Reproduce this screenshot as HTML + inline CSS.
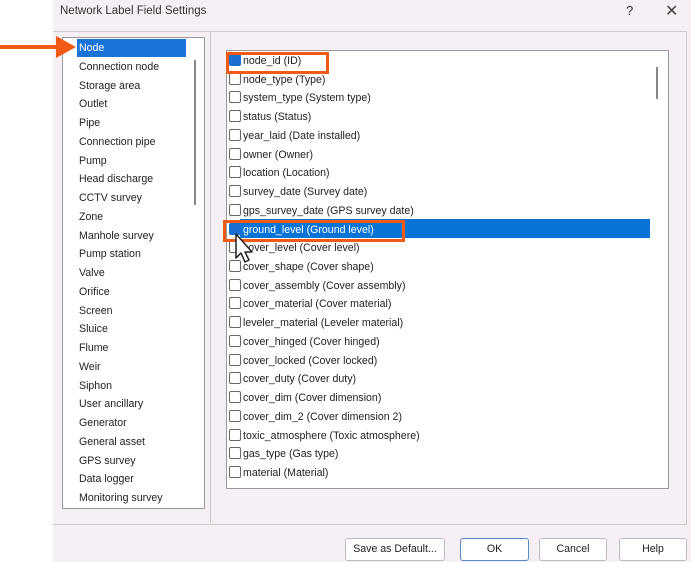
<!DOCTYPE html>
<html><head><style>
body{margin:0;width:691px;height:562px;position:relative;background:#fff;font-family:"Liberation Sans",sans-serif;font-size:10.6px;color:#222;overflow:hidden}
.dlg{position:absolute;left:53px;top:0;width:638px;height:562px;background:#f6eff6}
.abs{position:absolute}
.row{position:absolute;left:0;height:18px;line-height:18px;white-space:nowrap}
.cb{display:inline-block;width:10px;height:10px;border:1px solid #666;border-radius:2px;background:#fff;vertical-align:-2px;margin-right:2px}
.btn{position:absolute;top:538px;height:21px;border:1px solid #bbb;background:#fff;border-radius:3px;text-align:center;line-height:21px;font-size:10.6px}
</style></head><body>
<div class="dlg"></div>
<div class="abs" style="left:60px;top:5px;font-size:11.5px;color:#333">Network Label Field Settings</div>
<div class="abs" style="left:626px;top:3px;font-size:13px;color:#333">?</div>
<div class="abs" style="left:665px;top:1px;font-size:16px;color:#444">✕</div>
<div class="abs" style="left:53px;top:31px;width:633px;height:492px;border-top:1px solid #ccc;border-right:1px solid #ccc;border-bottom:1px solid #ccc"></div>
<div class="abs" style="left:210px;top:31px;width:1px;height:492px;background:#ccc"></div>
<div class="abs" style="left:62px;top:37px;width:141px;height:470px;border:1px solid #999;background:#fff"></div>
<div class="abs" style="left:77px;top:39px;width:109px;height:18px;background:#1a73d9"></div>
<div class="abs" style="left:194px;top:60px;width:2px;height:145px;background:#888"></div>
<div class="abs" style="left:79px;top:39px" id="l"></div>
<div class="abs" style="left:226px;top:50px;width:441px;height:437px;border:1px solid #999;background:#fff"></div>
<div class="abs" style="left:240px;top:219px;width:410px;height:19px;background:#0a74d6"></div>
<div class="abs" style="left:656px;top:67px;width:2px;height:32px;background:#888"></div>
<div class="abs" style="left:229px;top:52px" id="r"></div>
<div class="abs" style="left:226px;top:52px;width:97px;height:16px;border:3px solid #f05a14"></div>
<div class="abs" style="left:223px;top:220px;width:176px;height:16px;border:3px solid #f05a14"></div>
<div class="abs" style="left:0;top:45px;width:60px;height:4px;background:#f05a14"></div>
<div class="abs" style="left:56px;top:36px;width:0;height:0;border-top:11px solid transparent;border-bottom:11px solid transparent;border-left:20px solid #f05a14"></div>
<svg class="abs" style="left:232px;top:232px" width="26" height="34" viewBox="0 0 26 34"><path d="M4 2 L4 26 L9 21 L13 30 L17 28 L13 20 L20 20 Z" fill="#fff" stroke="#222" stroke-width="1.5" stroke-linejoin="round"/></svg>
<div class="btn" style="left:345px;width:98px">Save as Default...</div>
<div class="btn" style="left:460px;width:67px;border-color:#5a8ac6">OK</div>
<div class="btn" style="left:539px;width:66px">Cancel</div>
<div class="btn" style="left:619px;width:66px">Help</div>
<script>
var L=["Node","Connection node","Storage area","Outlet","Pipe","Connection pipe","Pump","Head discharge","CCTV survey","Zone","Manhole survey","Pump station","Valve","Orifice","Screen","Sluice","Flume","Weir","Siphon","User ancillary","Generator","General asset","GPS survey","Data logger","Monitoring survey"];
var h="";L.forEach(function(t,i){h+='<div class="row" style="top:'+(i*18.75)+'px;'+(i==0?'color:#fff':'')+'">'+t+'</div>'});
document.getElementById('l').innerHTML=h;
var R=["node_id (ID)","node_type (Type)","system_type (System type)","status (Status)","year_laid (Date installed)","owner (Owner)","location (Location)","survey_date (Survey date)","gps_survey_date (GPS survey date)","ground_level (Ground level)","cover_level (Cover level)","cover_shape (Cover shape)","cover_assembly (Cover assembly)","cover_material (Cover material)","leveler_material (Leveler material)","cover_hinged (Cover hinged)","cover_locked (Cover locked)","cover_duty (Cover duty)","cover_dim (Cover dimension)","cover_dim_2 (Cover dimension 2)","toxic_atmosphere (Toxic atmosphere)","gas_type (Gas type)","material (Material)"];
h="";R.forEach(function(t,i){var c=(i==0||i==9);h+='<div class="row" style="top:'+(i*18.73)+'px;'+(i==9?'color:#fff':'')+'"><span class="cb" style="'+(c?'background:#1a6fd0;border-color:#1a6fd0':'')+'"></span>'+t+'</div>'});
document.getElementById('r').innerHTML=h;
</script>
</body></html>
